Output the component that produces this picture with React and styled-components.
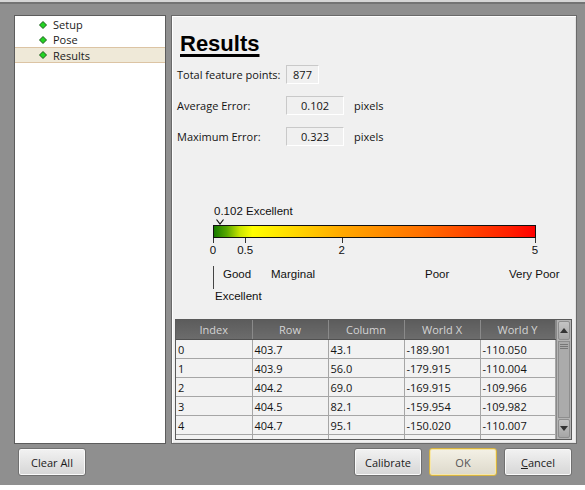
import React from 'react';
import styled, { createGlobalStyle } from 'styled-components';

const GlobalStyle = createGlobalStyle`
  html, body {
    margin: 0;
    padding: 0;
    background: #ffffff;
  }
`;

const UI_FONT = `"Open Sans", "Noto Sans", "DejaVu Sans", sans-serif`;
const ARIAL = `"Liberation Sans", Arial, sans-serif`;

const Window = styled.div`
  width: 585px;
  height: 490px;
  display: flex;
  flex-direction: column;
  background: #ffffff;
  overflow: hidden;
`;

const TopEdge = styled.div`
  height: 2px;
  background: #d6d6d6;
  border-bottom: 2px solid #747474;
`;

const Body = styled.div`
  height: 481px;
  box-sizing: border-box;
  padding: 11px 8px 0 14px;
  background: #8f8f8f;
  display: flex;
  flex-direction: column;
`;

const Panes = styled.div`
  display: flex;
  gap: 5px;
  height: 429px;
`;

const NavPane = styled.div`
  width: 152px;
  flex-shrink: 0;
  box-sizing: border-box;
  background: #ffffff;
  border: 1px solid #5c5c5c;
  padding-top: 1px;
  font-family: ${UI_FONT};
  font-size: 11px;
  color: #1a1a1a;
`;

const NavItem = styled.div`
  display: flex;
  align-items: center;
  gap: 6px;
  padding-left: 24px;
  box-sizing: border-box;
  background: ${({ active }) => (active ? '#efe9d8' : 'transparent')};
  border-top: 1px solid ${({ active }) => (active ? '#dcc4a4' : 'transparent')};
  border-bottom: 1px solid ${({ active }) => (active ? '#dcc4a4' : 'transparent')};
  height: ${({ active }) => (active ? '16px' : '15px')};
`;

const Diamond = () => (
  <svg width="8" height="8" viewBox="0 0 8 8">
    <polygon points="4,0.5 7.5,4 4,7.5 0.5,4" fill="#22d422" stroke="#1c5a1c" strokeWidth="1" />
  </svg>
);

const ContentPane = styled.div`
  flex: 1;
  min-width: 0;
  box-sizing: border-box;
  background: #f0f0f0;
  border: 1px solid #6a6a6a;
  box-shadow: inset 1px 1px 0 #ffffff, inset -1px -1px 0 #e2e2e2;
  padding: 0 4px 3px 3px;
  display: flex;
  flex-direction: column;
  font-family: ${UI_FONT};
  font-size: 11px;
  color: #141414;
`;

const Heading = styled.h1`
  margin: 15px 0 0 5px;
  font-family: ${ARIAL};
  font-size: 22px;
  line-height: 26px;
  font-weight: bold;
  color: #000;
  text-decoration: underline;
  text-decoration-thickness: 3px;
  text-underline-offset: 3px;
`;

const Form = styled.div`
  margin: 8px 0 0 2px;
  display: grid;
  grid-template-columns: 109px auto 1fr;
  row-gap: 12px;
  align-items: center;
`;

const Label = styled.span`
  white-space: nowrap;
`;

const ValueBox = styled.div`
  width: ${({ wide }) => (wide ? '58px' : '33px')};
  height: 19px;
  box-sizing: border-box;
  border: 1px solid;
  border-color: #c9c9c9 #ffffff #ffffff #c9c9c9;
  background: #f0f0f0;
  display: flex;
  align-items: center;
  justify-content: center;
`;

const Unit = styled.span`
  margin-left: 10px;
`;

const Scale = styled.div`
  margin: 58px 0 0 38px;
  width: 323px;
  font-family: ${ARIAL};
  font-size: 11.5px;
  color: #111;
`;

const Reading = styled.div`
  line-height: 14px;
  margin-left: 1px;
`;

const MarkerRow = styled.div`
  position: relative;
  height: 7px;
`;

const Marker = styled.svg`
  position: absolute;
  top: 1px;
  transform: translateX(-50%);
`;

const Bar = styled.div`
  height: 13px;
  box-sizing: border-box;
  border: 1px solid #111;
  background: linear-gradient(
    to right,
    #167a00 0%,
    #58a800 4%,
    #c8e400 8%,
    #ffff00 12%,
    #ffd800 25%,
    #ffa800 40%,
    #ff7000 65%,
    #ff2000 92%,
    #ff0000 100%
  );
`;

const Axis = styled.div`
  position: relative;
  height: 19px;
`;

const Tick = styled.div`
  position: absolute;
  top: 0;
  width: 1px;
  height: 5px;
  background: #333;
`;

const TickLabel = styled.span`
  position: absolute;
  top: 6px;
  line-height: 13px;
  transform: translateX(-50%);
`;

const Ratings = styled.div`
  position: relative;
  height: 48px;
`;

const Rating = styled.span`
  position: absolute;
  top: ${({ low }) => (low ? '32px' : '10px')};
  line-height: 14px;
  white-space: nowrap;
`;

const RatingRule = styled.div`
  position: absolute;
  left: 0;
  top: 9px;
  width: 1px;
  height: 23px;
  background: #444;
`;

const TableFrame = styled.div`
  margin: auto 0 0 0;
  height: 121px;
  box-sizing: border-box;
  border: 1px solid #5a5a5a;
  display: flex;
  background: #f2f2f2;
  overflow: hidden;
`;

const Grid = styled.table`
  border-collapse: collapse;
  table-layout: fixed;
  width: 379px;
  flex-shrink: 0;
  font-family: ${UI_FONT};
  font-size: 11px;
`;

const HeadCell = styled.th`
  height: 19px;
  padding: 0;
  font-weight: normal;
  color: #d4d4d4;
  background: linear-gradient(#5c5c5c, #6c6c6c);
  border-right: 1px solid #8a8a8a;
  border-bottom: 1px solid #505050;
  text-align: center;
`;

const Cell = styled.td`
  height: 19px;
  box-sizing: border-box;
  padding: 0 0 0 2px;
  color: #141414;
  border-right: 1px solid #a6a6a6;
  border-bottom: 1px solid #a6a6a6;
  white-space: nowrap;
`;

const ScrollBar = styled.div`
  width: 16px;
  box-sizing: border-box;
  display: flex;
  flex-direction: column;
  background: #b4b4b4;
  border-left: 1px solid #8a8a8a;
`;

const ScrollButton = styled.div`
  height: 17px;
  margin: 1px;
  border-radius: 2px;
  background: linear-gradient(#c4c4c4, #a6a6a6);
  border: 1px solid #8e8e8e;
  display: flex;
  align-items: center;
  justify-content: center;
`;

const Thumb = styled.div`
  flex: 1;
  margin: 0 1px;
  background: #ababab;
  border: 1px solid #8e8e8e;
  display: flex;
  flex-direction: column;
  align-items: center;
  padding-top: 2px;
  gap: 1px;
`;

const Grip = styled.div`
  width: 8px;
  height: 1px;
  background: #777;
`;

const ButtonBar = styled.div`
  display: flex;
  align-items: center;
  gap: 7px;
  margin-top: 4px;
  padding: 0 5px 0 4px;
  height: 28px;
`;

const Spacer = styled.div`
  flex: 1;
`;

const Button = styled.button`
  width: 68px;
  height: 28px;
  box-sizing: border-box;
  padding: 0;
  border-radius: 3px;
  border: 1px solid ${({ primary }) => (primary ? '#d8b440' : '#707070')};
  background: ${({ primary }) =>
    primary ? 'linear-gradient(#f4f1e6, #ddd9cb)' : 'linear-gradient(#f2f2f2, #d6d6d6)'};
  box-shadow: inset 0 0 0 1px ${({ primary }) => (primary ? '#f7e7a8' : '#fafafa')};
  font-family: ${UI_FONT};
  font-size: 11px;
  color: ${({ primary }) => (primary ? '#555' : '#1a1a1a')};
`;

const BottomEdge = styled.div`
  flex: 1;
  background: #ffffff;
`;

const MAX = 5;
const SCALE_WIDTH = 322;
const toX = (v) => (v / MAX) * SCALE_WIDTH;

const ticks = [0, 0.5, 2, 5];
const ratings = [
  { text: 'Good', left: 10 },
  { text: 'Marginal', left: 58 },
  { text: 'Poor', left: 212 },
  { text: 'Very Poor', left: 296 },
];

const columns = ['Index', 'Row', 'Column', 'World X', 'World Y'];
const widths = [76, 76, 76, 76, 75];
const rows = [
  ['0', '403.7', '43.1', '-189.901', '-110.050'],
  ['1', '403.9', '56.0', '-179.915', '-110.004'],
  ['2', '404.2', '69.0', '-169.915', '-109.966'],
  ['3', '404.5', '82.1', '-159.954', '-109.982'],
  ['4', '404.7', '95.1', '-150.020', '-110.007'],
  ['', '', '', '', ''],
];

const Arrow = ({ down }) => (
  <svg width="8" height="5" viewBox="0 0 8 5">
    <polygon points={down ? '0,0 8,0 4,5' : '0,5 8,5 4,0'} fill="#333" />
  </svg>
);

const App = () => {
  const avgError = 0.102;

  return (
    <Window>
      <GlobalStyle />
      <TopEdge />
      <Body>
        <Panes>
          <NavPane>
            <NavItem><Diamond />Setup</NavItem>
            <NavItem><Diamond />Pose</NavItem>
            <NavItem active><Diamond />Results</NavItem>
          </NavPane>
          <ContentPane>
            <Heading>Results</Heading>
            <Form>
              <Label>Total feature points:</Label>
              <ValueBox>877</ValueBox>
              <span />
              <Label>Average Error:</Label>
              <ValueBox wide>0.102</ValueBox>
              <Unit>pixels</Unit>
              <Label>Maximum Error:</Label>
              <ValueBox wide>0.323</ValueBox>
              <Unit>pixels</Unit>
            </Form>
            <Scale>
              <Reading>0.102 Excellent</Reading>
              <MarkerRow>
                <Marker width="8" height="6" viewBox="0 0 8 6" style={{ left: toX(avgError) }}>
                  <polyline points="0.5,0.5 4,5 7.5,0.5" fill="none" stroke="#111" strokeWidth="1.2" />
                </Marker>
              </MarkerRow>
              <Bar />
              <Axis>
                {ticks.map((t) => (
                  <React.Fragment key={t}>
                    <Tick style={{ left: toX(t) }} />
                    <TickLabel style={{ left: toX(t) }}>{t}</TickLabel>
                  </React.Fragment>
                ))}
              </Axis>
              <Ratings>
                <RatingRule />
                {ratings.map((r) => (
                  <Rating key={r.text} style={{ left: r.left }}>{r.text}</Rating>
                ))}
                <Rating low style={{ left: 2 }}>Excellent</Rating>
              </Ratings>
            </Scale>
            <TableFrame>
              <Grid>
                <colgroup>
                  {widths.map((w, i) => <col key={i} style={{ width: w }} />)}
                </colgroup>
                <thead>
                  <tr>
                    {columns.map((c) => <HeadCell key={c}>{c}</HeadCell>)}
                  </tr>
                </thead>
                <tbody>
                  {rows.map((r, i) => (
                    <tr key={i}>
                      {r.map((v, j) => <Cell key={j}>{v}</Cell>)}
                    </tr>
                  ))}
                </tbody>
              </Grid>
              <ScrollBar>
                <ScrollButton><Arrow /></ScrollButton>
                <Thumb>
                  <Grip /><Grip /><Grip />
                </Thumb>
                <ScrollButton><Arrow down /></ScrollButton>
              </ScrollBar>
            </TableFrame>
          </ContentPane>
        </Panes>
        <ButtonBar>
          <Button>Clear All</Button>
          <Spacer />
          <Button>Calibrate</Button>
          <Button primary>OK</Button>
          <Button><u>C</u>ancel</Button>
        </ButtonBar>
      </Body>
      <BottomEdge />
    </Window>
  );
};

export default App;
